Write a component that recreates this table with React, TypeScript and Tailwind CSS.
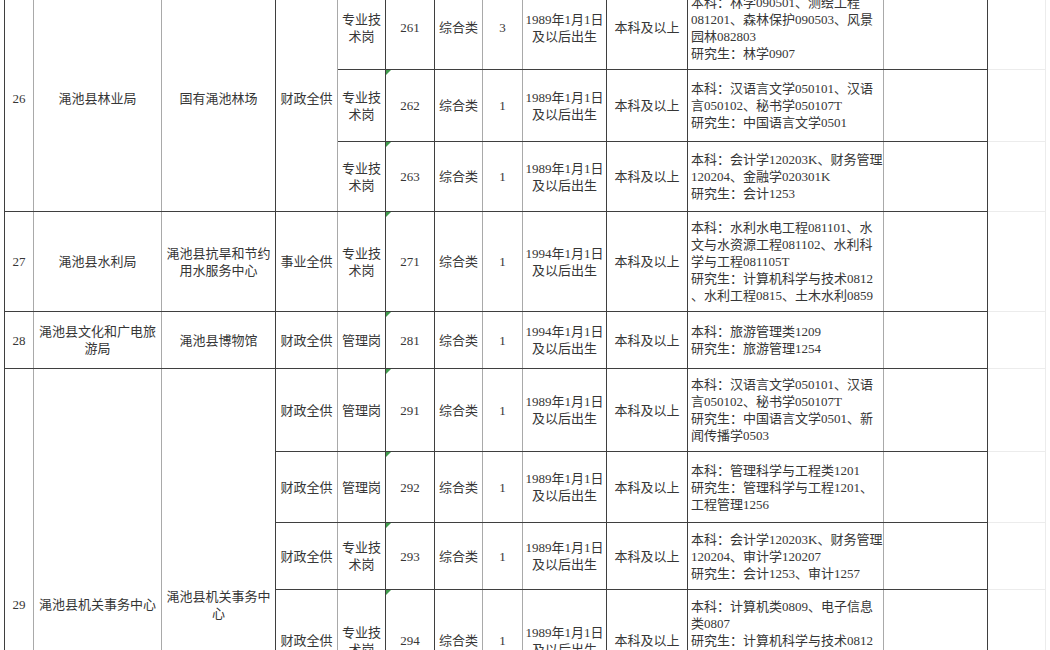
type Sub = {
  fund?: string
  post: string[]
  code: string
  cat: string
  n: string
  born: string[]
  edu: string
  major: string[]
  h: string
}

type Group = {
  no: string
  dept: string[]
  unit: string[]
  fund?: string
  subs: Sub[]
}

const B89 = ['1989年1月1日', '及以后出生']
const B94 = ['1994年1月1日', '及以后出生']
const TECH = ['专业技', '术岗']
const MGR = ['管理岗']

const groups: Group[] = [
  {
    no: '26',
    dept: ['渑池县林业局'],
    unit: ['国有渑池林场'],
    fund: '财政全供',
    subs: [
      {
        post: TECH,
        code: '261',
        cat: '综合类',
        n: '3',
        born: B89,
        edu: '本科及以上',
        major: ['本科：林学090501、测绘工程', '081201、森林保护090503、风景', '园林082803', '研究生：林学0907'],
        h: 'h-[84px]',
      },
      {
        post: TECH,
        code: '262',
        cat: '综合类',
        n: '1',
        born: B89,
        edu: '本科及以上',
        major: ['本科：汉语言文学050101、汉语', '言050102、秘书学050107T', '研究生：中国语言文学0501'],
        h: 'h-[72px]',
      },
      {
        post: TECH,
        code: '263',
        cat: '综合类',
        n: '1',
        born: B89,
        edu: '本科及以上',
        major: ['本科：会计学120203K、财务管理', '120204、金融学020301K', '研究生：会计1253'],
        h: 'h-[70px]',
      },
    ],
  },
  {
    no: '27',
    dept: ['渑池县水利局'],
    unit: ['渑池县抗旱和节约', '用水服务中心'],
    fund: '事业全供',
    subs: [
      {
        post: TECH,
        code: '271',
        cat: '综合类',
        n: '1',
        born: B94,
        edu: '本科及以上',
        major: [
          '本科：水利水电工程081101、水',
          '文与水资源工程081102、水利科',
          '学与工程081105T',
          '研究生：计算机科学与技术0812',
          '、水利工程0815、土木水利0859',
        ],
        h: 'h-[100px]',
      },
    ],
  },
  {
    no: '28',
    dept: ['渑池县文化和广电旅', '游局'],
    unit: ['渑池县博物馆'],
    fund: '财政全供',
    subs: [
      {
        post: MGR,
        code: '281',
        cat: '综合类',
        n: '1',
        born: B94,
        edu: '本科及以上',
        major: ['本科：旅游管理类1209', '研究生：旅游管理1254'],
        h: 'h-[57px]',
      },
    ],
  },
  {
    no: '29',
    dept: ['渑池县机关事务中心'],
    unit: ['渑池县机关事务中', '心'],
    subs: [
      {
        fund: '财政全供',
        post: MGR,
        code: '291',
        cat: '综合类',
        n: '1',
        born: B89,
        edu: '本科及以上',
        major: ['本科：汉语言文学050101、汉语', '言050102、秘书学050107T', '研究生：中国语言文学0501、新', '闻传播学0503'],
        h: 'h-[83px]',
      },
      {
        fund: '财政全供',
        post: MGR,
        code: '292',
        cat: '综合类',
        n: '1',
        born: B89,
        edu: '本科及以上',
        major: ['本科：管理科学与工程类1201', '研究生：管理科学与工程1201、', '工程管理1256'],
        h: 'h-[71px]',
      },
      {
        fund: '财政全供',
        post: TECH,
        code: '293',
        cat: '综合类',
        n: '1',
        born: B89,
        edu: '本科及以上',
        major: ['本科：会计学120203K、财务管理', '120204、审计学120207', '研究生：会计1253、审计1257'],
        h: 'h-[67px]',
      },
      {
        fund: '财政全供',
        post: TECH,
        code: '294',
        cat: '综合类',
        n: '1',
        born: B89,
        edu: '本科及以上',
        major: ['本科：计算机类0809、电子信息', '类0807', '研究生：计算机科学与技术0812', '、电子科学与技术0809、信息与', '通信工程0810'],
        h: 'h-[102px]',
      },
      {
        fund: '财政全供',
        post: TECH,
        code: '295',
        cat: '综合类',
        n: '1',
        born: B89,
        edu: '本科及以上',
        major: ['本科：土木工程081001', '研究生：土木工程0814'],
        h: 'h-[149px]',
      },
    ],
  },
]

// right border colours, per column
const D = 'border-r border-r-[#3f3f3f]'
const G = 'border-r border-r-[#a9a9a9]'
const L = 'border-r border-r-[#ececec]'
const BB = 'border-b border-b-[#3f3f3f]'
const BL = 'border-b border-b-[#ececec]'

function Lines({ lines }: { lines: string[] }) {
  return (
    <>
      {lines.map((l, i) => (
        <div key={i} className="whitespace-nowrap">
          {l}
        </div>
      ))}
    </>
  )
}

function Cell({
  edge,
  bottom = BB,
  rowSpan,
  left,
  mark,
  children,
}: {
  edge: string
  bottom?: string
  rowSpan?: number
  left?: boolean
  mark?: boolean
  children?: React.ReactNode
}) {
  return (
    <td
      rowSpan={rowSpan}
      className={`${edge} ${bottom} relative p-0 align-middle ${left ? 'pl-[3px] text-left' : 'text-center'}`}
    >
      {mark && (
        <span className="absolute left-0 top-0 h-0 w-0 border-r-[5px] border-t-[5px] border-r-transparent border-t-[#3f9b4c]" />
      )}
      {children}
    </td>
  )
}

export default function App() {
  return (
    <div className="h-[650px] w-[1050px] overflow-hidden bg-white pl-[4px] text-[13px] leading-[17px] text-[#363636] [font-family:'Liberation_Serif','Noto_Sans_CJK_SC',serif]">
      <table className="-mt-[15px] table-fixed border-collapse border-l border-t border-l-[#3f3f3f] border-t-[#3f3f3f]">
        <colgroup>
          <col className="w-[29px]" />
          <col className="w-[128px]" />
          <col className="w-[114px]" />
          <col className="w-[62px]" />
          <col className="w-[48px]" />
          <col className="w-[49px]" />
          <col className="w-[48px]" />
          <col className="w-[40px]" />
          <col className="w-[84px]" />
          <col className="w-[81px]" />
          <col className="w-[196px]" />
          <col className="w-[104px]" />
          <col className="w-[58px]" />
        </colgroup>
        <tbody>
          {groups.map((g) =>
            g.subs.map((s, i) => (
              <tr key={s.code} className={s.h}>
                {i === 0 && (
                  <>
                    <Cell edge={G} rowSpan={g.subs.length}>
                      {g.no}
                    </Cell>
                    <Cell edge={G} rowSpan={g.subs.length}>
                      <Lines lines={g.dept} />
                    </Cell>
                    <Cell edge={D} rowSpan={g.subs.length}>
                      <Lines lines={g.unit} />
                    </Cell>
                    {g.fund && (
                      <Cell edge={G} rowSpan={g.subs.length}>
                        {g.fund}
                      </Cell>
                    )}
                  </>
                )}
                {!g.fund && <Cell edge={G}>{s.fund}</Cell>}
                <Cell edge={D}>
                  <Lines lines={s.post} />
                </Cell>
                <Cell edge={D} mark>
                  {s.code}
                </Cell>
                <Cell edge={G}>{s.cat}</Cell>
                <Cell edge={G}>{s.n}</Cell>
                <Cell edge={D}>
                  <Lines lines={s.born} />
                </Cell>
                <Cell edge={D}>{s.edu}</Cell>
                <Cell edge={G} left>
                  <Lines lines={s.major} />
                </Cell>
                <Cell edge={D} />
                <Cell edge={L} bottom={BL} />
              </tr>
            )),
          )}
        </tbody>
      </table>
    </div>
  )
}
